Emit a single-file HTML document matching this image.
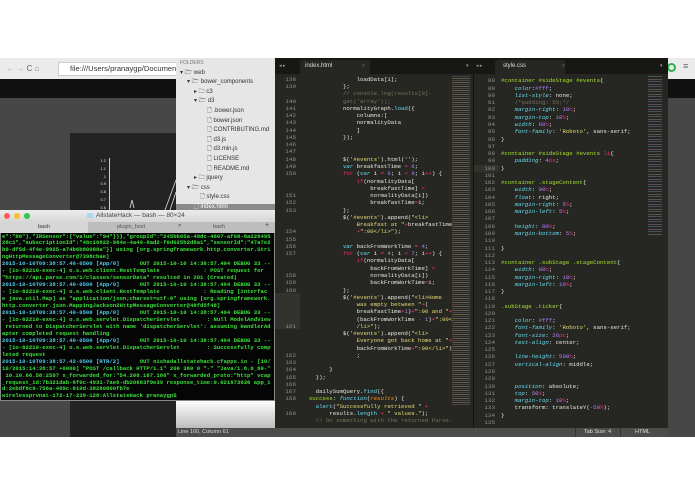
<!DOCTYPE html>
<html><head><meta charset="utf-8"><style>
*{margin:0;padding:0;box-sizing:border-box}
body{width:695px;height:494px;background:#fff;position:relative;overflow:hidden;font-family:"Liberation Sans",sans-serif}
.a{position:absolute}
pre{font-family:"Liberation Mono",monospace;margin:0}
.code{font-size:5.7px;line-height:7.27px;color:#e8e8e0;white-space:pre}
.k{color:#f92672}.s{color:#e6db74}.f{color:#66d9ef}.c{color:#75715e}.n{color:#ae81ff}.g{color:#a6e22e}.i{color:#66d9ef;font-style:italic}.o{color:#fd971f;font-style:italic}
.num{color:#8f908a;text-align:right;font-size:5.9px;line-height:7.27px;font-family:"Liberation Mono",monospace;white-space:pre}
.tree div{height:9.6px;font-size:6px;color:#333;line-height:9.6px;white-space:nowrap}
.term{font-size:5.6px;line-height:6.95px;color:#3be03b;white-space:pre;font-weight:bold}
.t{color:#4fc8e8}
</style></head><body>
<div class="a" style="left:0;top:58px;width:176px;height:21px;background:#ebebeb"></div>
<div class="a" style="left:6px;top:64px;font-size:8px;color:#aaa">← → <span style="color:#666">C</span> <span style="color:#888">⌂</span></div>
<div class="a" style="left:58px;top:62px;width:118px;height:14px;background:#fff;border:1px solid #ccc;border-right:none"></div>
<div class="a" style="left:70px;top:64px;font-size:7.6px;color:#333;white-space:nowrap">file:///Users/pranaygp/Documents</div>
<div class="a" style="left:0;top:79px;width:176px;height:19px;background:#111"></div>
<div class="a" style="left:0;top:98px;width:176px;height:339px;background:#474747"></div>
<div class="a" style="left:70px;top:133px;width:106px;height:304px;background:#232323"></div>
<div class="a" style="left:96px;top:157px;font-size:4px;color:#ddd;line-height:7.8px;text-align:right;width:10px">1.2<br>1.1<br>1<br>0.9<br>0.8<br>0.7<br>0.6</div>
<div class="a" style="left:109px;top:158px;width:1px;height:52px;background:#ccc"></div>
<svg class="a" style="left:120px;top:170px" width="56" height="40"><path d="M10 38 L12 30 L14 38 M45 40 L56 10 M50 40 L56 22" stroke="#ddd" fill="none" stroke-width="0.8"/></svg>
<div class="a" style="left:665px;top:58px;width:30px;height:21px;background:#ebebeb"></div>
<div class="a" style="left:667px;top:63px;width:9px;height:9px;border:2px solid #2db04b;border-radius:50%"></div>
<div class="a" style="left:683px;top:61px;font-size:9px;color:#666">≡</div>
<div class="a" style="left:665px;top:79px;width:30px;height:19px;background:#111"></div>
<div class="a" style="left:665px;top:98px;width:30px;height:339px;background:#474747"></div>
<div class="a" style="left:176px;top:58px;width:99px;height:370px;background:#e6e6e6"></div>
<div class="a" style="left:176px;top:400px;width:99px;height:28px;background:linear-gradient(#fff,#bdbdbd)"></div>
<div class="a" style="left:176px;top:204px;width:99px;height:10px;background:#8a8a8a"></div>
<div class="a tree" style="left:180px;top:59px">
<div style="font-size:5px;color:#777">FOLDERS</div>
<div>▾ 🗁 web</div>
<div style="padding-left:7px">▾ 🗁 bower_components</div>
<div style="padding-left:14px">▸ 🗀 c3</div>
<div style="padding-left:14px">▾ 🗁 d3</div>
<div style="padding-left:27px">🗋 .bower.json</div>
<div style="padding-left:27px">🗋 bower.json</div>
<div style="padding-left:27px">🗋 CONTRIBUTING.md</div>
<div style="padding-left:27px">🗋 d3.js</div>
<div style="padding-left:27px">🗋 d3.min.js</div>
<div style="padding-left:27px">🗋 LICENSE</div>
<div style="padding-left:27px">🗋 README.md</div>
<div style="padding-left:14px">▸ 🗀 jquery</div>
<div style="padding-left:7px">▾ 🗁 css</div>
<div style="padding-left:20px">🗋 style.css</div>
<div style="padding-left:14px;color:#fff">🗋 index.html</div>
</div>
<div class="a" style="left:275px;top:58px;width:393px;height:370px;background:#262722"></div>
<div class="a" style="left:275px;top:58px;width:393px;height:16px;background:#171714"></div>
<div class="a" style="left:300px;top:60px;width:70px;height:14px;background:#262722;border-radius:3px 3px 0 0"></div>
<div class="a" style="left:495px;top:60px;width:70px;height:14px;background:#262722;border-radius:3px 3px 0 0"></div>
<div class="a" style="left:279px;top:63px;font-size:5px;color:#999">◂ ▸</div>
<div class="a" style="left:476px;top:63px;font-size:5px;color:#999">◂ ▸</div>
<div class="a" style="left:305px;top:63px;font-size:6px;color:#ddd">index.html</div>
<div class="a" style="left:362px;top:63px;font-size:5px;color:#777">×</div>
<div class="a" style="left:503px;top:63px;font-size:6px;color:#ddd">style.css</div>
<div class="a" style="left:562px;top:63px;font-size:5px;color:#777">×</div>
<div class="a" style="left:466px;top:63px;font-size:5px;color:#999">▾</div>
<div class="a" style="left:660px;top:63px;font-size:5px;color:#999">▾</div>
<div class="a" style="left:473px;top:74px;width:1px;height:354px;background:#111"></div>
<div class="a" style="left:275px;top:293px;width:25px;height:36px;background:#33332e"></div>
<div class="a" style="left:474px;top:165px;width:25px;height:7px;background:#33332e"></div>
<div class="a" style="left:452px;top:76px;width:18px;height:330px;background:repeating-linear-gradient(#6b5a6a 0 1px,transparent 1px 2px,#8a8a5a 2px 3px,transparent 3px 4px);opacity:.55"></div>
<div class="a" style="left:648px;top:76px;width:14px;height:160px;background:repeating-linear-gradient(#5a6a8a 0 1px,transparent 1px 3px,#8a6a6a 3px 4px,transparent 4px 5px);opacity:.6"></div>
<pre class="a num" style="left:280px;top:75.8px;width:16px">
138
139

140
141
142
143
144
145
146
147
148
149
150


151
152
153


154
155
156
157


158
159
160




161



162
163
164
165
166
167
168

169</pre>
<pre class="a code" style="left:302px;top:75.8px">                loadData[i];
            };
            <span class="c">// console.log(results[0].</span>
            <span class="c">get('array'));</span>
            normalityGraph.<span class="f">load</span>({
                columns:[
                normalityData
                ]
            });


            $(<span class="s">'#events'</span>).html(<span class="s">''</span>);
            <span class="i">var</span> breakfastTime <span class="k">=</span> <span class="n">6</span>;
            <span class="k">for</span> (<span class="i">var</span> i <span class="k">=</span> <span class="n">6</span>; i <span class="k">&lt;</span> <span class="n">9</span>; i<span class="k">++</span>) {
                <span class="k">if</span>(normalityData[
                    breakfastTime] <span class="k">&lt;</span>
                    normalityData[i])
                    breakfastTime<span class="k">=</span>i;
            };
            $(<span class="s">'#events'</span>).append(<span class="s">"&lt;li&gt;</span>
                <span class="s">Breakfast at "</span><span class="k">+</span>breakfastTime
                <span class="k">+</span><span class="s">":00&lt;/li&gt;"</span>);

            <span class="i">var</span> backFromWorkTime <span class="k">=</span> <span class="n">4</span>;
            <span class="k">for</span> (<span class="i">var</span> i <span class="k">=</span> <span class="n">4</span>; i <span class="k">&lt;</span> <span class="n">7</span>; i<span class="k">++</span>) {
                <span class="k">if</span>(normalityData[
                    backFromWorkTime] <span class="k">&lt;</span>
                    normalityData[i])
                    backFromWorkTime<span class="k">=</span>i;
            };
            $(<span class="s">'#events'</span>).append(<span class="s">"&lt;li&gt;Home</span>
                <span class="s">was empty between "</span><span class="k">+</span>(
                breakfastTime<span class="k">+</span><span class="n">1</span>)<span class="k">+</span><span class="s">":00 and "</span><span class="k">+</span>
                (backFromWorkTime <span class="k">-</span> <span class="n">1</span>)<span class="k">+</span><span class="s">":00&lt;</span>
                <span class="s">/li&gt;"</span>);
            $(<span class="s">'#events'</span>).append(<span class="s">"&lt;li&gt;</span>
                <span class="s">Everyone got back home at "</span><span class="k">+</span>
                backFromWorkTime<span class="k">+</span><span class="s">":00&lt;/li&gt;"</span>)
                ;

        }
    });

    dailySumQuery.<span class="f">find</span>({
  <span class="g">success</span>: <span class="i">function</span>(<span class="o">results</span>) {
    <span class="f">alert</span>(<span class="s">"Successfully retrieved "</span> <span class="k">+</span>
        results.<span class="f">length</span> <span class="k">+</span> <span class="s">" values."</span>);
    <span class="c">// Do something with the returned Parse.</span></pre>
<pre class="a num" style="left:477px;top:77.4px;width:18px">88
89
90
91
92
93
94
95
96
97
98
99
100
101
102
103
104
105
106
107
108
109
110
111
112
113
114
115
116
117
118
119
120
121
122
123
124
125
126
127
128
129
130
131
132
133
134
135</pre>
<pre class="a code" style="left:501px;top:77.4px">
<span class="g">#container #sideStage #events</span>{
    <span class="i">color</span>:<span class="n">#fff</span>;
    <span class="i">list-style</span>: none;
    <span class="c">/*padding: 5%;*/</span>
    <span class="i">margin-right</span>: <span class="n">10</span><span class="k">%</span>;
    <span class="i">margin-top</span>: <span class="n">10</span><span class="k">%</span>;
    <span class="i">width</span>: <span class="n">80</span><span class="k">%</span>;
    <span class="i">font-family</span>: <span class="s">'Roboto'</span>, sans-serif;
}

<span class="g">#container #sideStage #events</span> <span class="k">li</span>{
    <span class="i">padding</span>: <span class="n">4</span><span class="k">px</span>;
}

<span class="g">#container .stageContent</span>{
    <span class="i">width</span>: <span class="n">90</span><span class="k">%</span>;
    <span class="i">float</span>: right;
    <span class="i">margin-right</span>: <span class="n">5</span><span class="k">%</span>;
    <span class="i">margin-left</span>: <span class="n">5</span><span class="k">%</span>;

    <span class="i">height</span>: <span class="n">80</span><span class="k">%</span>;
    <span class="i">margin-bottom</span>: <span class="n">5</span><span class="k">%</span>;

}

<span class="g">#container .subStage .stageContent</span>{
    <span class="i">width</span>: <span class="n">80</span><span class="k">%</span>;
    <span class="i">margin-right</span>: <span class="n">10</span><span class="k">%</span>;
    <span class="i">margin-left</span>: <span class="n">10</span><span class="k">%</span>;
}

<span class="g">.subStage .ticker</span>{

    <span class="i">color</span>: <span class="n">#fff</span>;
    <span class="i">font-family</span>: <span class="s">'Roboto'</span>, sans-serif;
    <span class="i">font-size</span>: <span class="n">26</span><span class="k">pt</span>;
    <span class="i">text-align</span>: center;

    <span class="i">line-height</span>: <span class="n">500</span><span class="k">%</span>;
    <span class="i">vertical-align</span>: middle;


    <span class="i">position</span>: absolute;
    <span class="i">top</span>: <span class="n">50</span><span class="k">%</span>;
    <span class="i">margin-top</span>: <span class="n">10</span><span class="k">%</span>;
    transform: translateY(<span class="n">-50</span><span class="k">%</span>);
}</pre>
<div class="a" style="left:176px;top:428px;width:492px;height:9px;background:#4c4c4a"></div>
<div class="a" style="left:178px;top:429px;font-size:5.5px;color:#ddd">Line 160, Column 61</div>
<div class="a" style="left:575px;top:428px;width:1px;height:9px;background:#333"></div>
<div class="a" style="left:620px;top:428px;width:1px;height:9px;background:#333"></div>
<div class="a" style="left:584px;top:429px;font-size:5.5px;color:#ddd">Tab Size: 4</div>
<div class="a" style="left:635px;top:429px;font-size:5.5px;color:#ddd">HTML</div>
<div class="a" style="left:0;top:210px;width:275px;height:191px;background:#050505;border:1px solid #888"></div>
<div class="a" style="left:0;top:210px;width:275px;height:12px;background:linear-gradient(#ececec,#d6d6d6)"></div>
<div class="a" style="left:4px;top:213px;width:6px;height:6px;border-radius:50%;background:#fc5f57"></div>
<div class="a" style="left:14px;top:213px;width:6px;height:6px;border-radius:50%;background:#fdbc2e"></div>
<div class="a" style="left:24px;top:213px;width:6px;height:6px;border-radius:50%;background:#33c748"></div>
<div class="a" style="left:87px;top:213px;width:6px;height:5px;background:#a8d8f0"></div>
<div class="a" style="left:96px;top:212px;font-size:6.5px;color:#444">AllstateHack — bash — 80×24</div>
<div class="a" style="left:0;top:222px;width:275px;height:11px;background:#bdbdbd"></div>
<div class="a" style="left:0;top:222px;width:88px;height:11px;background:#d6d6d6"></div>
<div class="a" style="left:38px;top:224px;font-size:5.5px;color:#333">bash</div>
<div class="a" style="left:117px;top:224px;font-size:5.5px;color:#555">plugin_host</div>
<div class="a" style="left:178px;top:223px;font-size:5.5px;color:#333">×</div>
<div class="a" style="left:213px;top:224px;font-size:5.5px;color:#555">bash</div>
<div class="a" style="left:265px;top:222px;font-size:7px;color:#444">+</div>
<pre class="a term" style="left:2px;top:233.5px">e":"86"},"IRSensor":{"value":"94"}}},"groupId":"245bb05a-48dc-4607-af08-8a226495
28c1","subscriptionId":"48c16822-964e-4a40-8ad2-f0d025b2d8a1","sensorId":"47a7e2
b9-df5d-4f4e-9925-a74b6b80088a"}] using [org.springframework.http.converter.Stri
ngHttpMessageConverter@7398cbae]
<span class="t">2015-10-10T09:38:57.40-0500 [App/0]</span>      OUT 2015-10-10 14:38:57.404 DEBUG 33 --
- [io-62210-exec-4] o.s.web.client.RestTemplate             : POST request for
"https://api.parse.com/1/classes/sensorData" resulted in 201 (Created)
<span class="t">2015-10-10T09:38:57.40-0500 [App/0]</span>      OUT 2015-10-10 14:38:57.404 DEBUG 33 --
- [io-62210-exec-4] o.s.web.client.RestTemplate             : Reading [interfac
e java.util.Map] as "application/json;charset=utf-8" using [org.springframework.
http.converter.json.MappingJackson2HttpMessageConverter@48fd5f48]
<span class="t">2015-10-10T09:38:57.40-0500 [App/0]</span>      OUT 2015-10-10 14:38:57.404 DEBUG 33 --
- [io-62210-exec-4] o.s.web.servlet.DispatcherServlet        : Null ModelAndView
 returned to DispatcherServlet with name 'dispatcherServlet': assuming HandlerAd
apter completed request handling
<span class="t">2015-10-10T09:38:57.40-0500 [App/0]</span>      OUT 2015-10-10 14:38:57.404 DEBUG 33 --
- [io-62210-exec-4] o.s.web.servlet.DispatcherServlet        : Successfully comp
leted request
<span class="t">2015-10-10T09:38:57.42-0500 [RTR/2]</span>      OUT nishadallstatehack.cfapps.io - [10/
10/2015:14:38:57 +0000] "POST /callback HTTP/1.1" 200 360 0 "-" "Java/1.8.0_60-"
 10.10.66.58:2597 x_forwarded_for:"54.208.167.186" x_forwarded_proto:"http" vcap
_request_id:7b321dab-6f0c-4931-7ae6-db20683f9e39 response_time:0.021673636 app_i
d:2ebdf6c9-756a-409c-810d-38260800fb7e
wirelessprvnat-172-17-239-128:AllstateHack pranaygp$</pre>
</body></html>
